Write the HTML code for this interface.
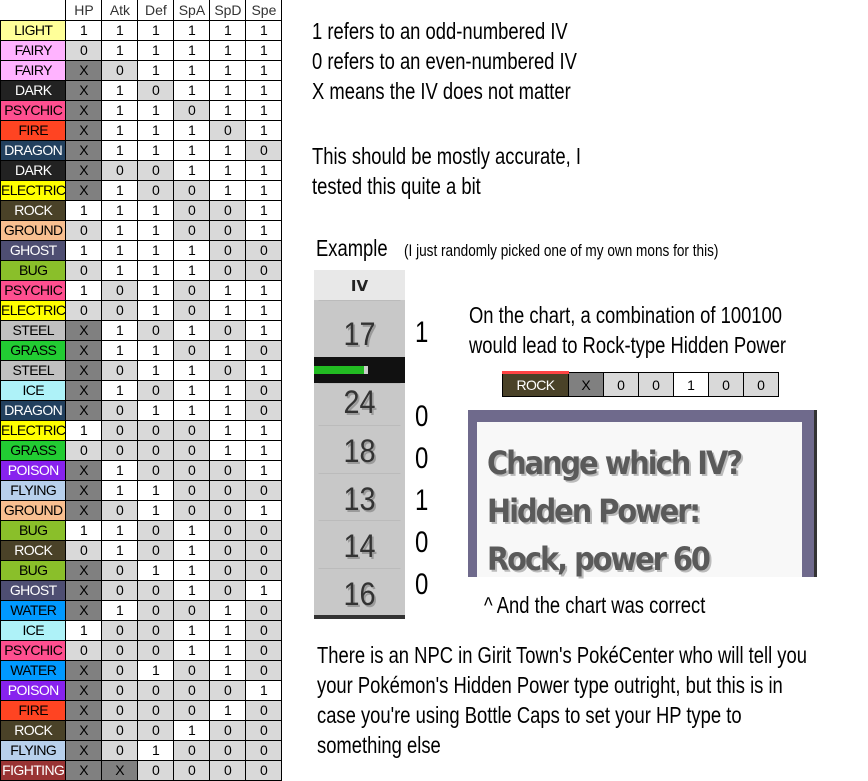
<!DOCTYPE html>
<html><head><meta charset="utf-8"><style>
*{margin:0;padding:0;box-sizing:border-box}
body{width:868px;height:780px;background:#fff;position:relative;overflow:hidden;font-family:"Liberation Sans","DejaVu Sans",sans-serif;color:#000}
table{position:absolute;left:0;top:0;border-collapse:collapse;font-size:14px}
td{width:36px;height:20px;border:1px solid #000;text-align:center;padding:0;line-height:18px}
td:first-child{width:64px;font-weight:normal;letter-spacing:-0.6px}
.hd td{border-top:none;color:#333}
.hd td:first-child{border-left:none}
.z{background:#d9d9d9}.x{background:#808080}
.LI{background:#ffff99}.FA{background:#ffb3ff}.DA{background:#222;color:#fff}.PS{background:#ff4f8f}
.FI{background:#ff4422}.DR{background:#22405e;color:#fff}.EL{background:#ffff00}.RO{background:#4a4228;color:#fff}
.GR{background:#f8bf90}.GH{background:#4e4e72;color:#fff}.BU{background:#8abf2a}.ST{background:#c0c0c0}
.GA{background:#22cc33}.IC{background:#aef2f8}.PO{background:#8822ee;color:#fff}.FL{background:#b8d0ec}
.WA{background:#0099ff}.FG{background:#993333;color:#fff}
.t{position:absolute;white-space:nowrap;font-size:23px;transform:scaleX(0.8);transform-origin:0 0;line-height:30px}
.iv{position:absolute;left:314px;top:270px;width:91px;height:349px;background:#c8c8c8}
.ivh{position:absolute;left:0;top:0;width:91px;height:30px;background:#e8e8e8;font:bold 15px "DejaVu Sans",sans-serif;text-align:center;line-height:32px;color:#222}
.ivn{position:absolute;left:0;width:91px;height:48px;border-top:1px solid #bbb;text-align:center;font-size:32px;color:#333;line-height:50px;text-shadow:2px 2px 0 #9a9a9a;transform:scaleX(.9)}
.d{position:absolute;left:415px;font-size:30px;transform:scaleX(.8);transform-origin:0 0}
.dlg{position:absolute;left:468px;top:410px;width:349px;height:167px;background:#6f6a8c;border-right:3px solid #333}
.dlgi{position:absolute;left:9px;top:12px;right:12px;bottom:0;background:#f8f8f8}
.dl{position:absolute;left:10px;font:bold 32px "DejaVu Sans Condensed","DejaVu Sans",sans-serif;color:#5a5a5a;text-shadow:2px 2px 0 #bbb;letter-spacing:-2px;white-space:nowrap}
.mini{position:absolute;top:371px;border-collapse:collapse;font-size:14px}
</style></head><body>
<table>
<tr class="hd"><td></td><td>HP</td><td>Atk</td><td>Def</td><td>SpA</td><td>SpD</td><td>Spe</td></tr>
<tr><td class="LI">LIGHT</td><td>1</td><td>1</td><td>1</td><td>1</td><td>1</td><td>1</td></tr>
<tr><td class="FA">FAIRY</td><td class="z">0</td><td>1</td><td>1</td><td>1</td><td>1</td><td>1</td></tr>
<tr><td class="FA">FAIRY</td><td class="x">X</td><td class="z">0</td><td>1</td><td>1</td><td>1</td><td>1</td></tr>
<tr><td class="DA">DARK</td><td class="x">X</td><td>1</td><td class="z">0</td><td>1</td><td>1</td><td>1</td></tr>
<tr><td class="PS">PSYCHIC</td><td class="x">X</td><td>1</td><td>1</td><td class="z">0</td><td>1</td><td>1</td></tr>
<tr><td class="FI">FIRE</td><td class="x">X</td><td>1</td><td>1</td><td>1</td><td class="z">0</td><td>1</td></tr>
<tr><td class="DR">DRAGON</td><td class="x">X</td><td>1</td><td>1</td><td>1</td><td>1</td><td class="z">0</td></tr>
<tr><td class="DA">DARK</td><td class="x">X</td><td class="z">0</td><td class="z">0</td><td>1</td><td>1</td><td>1</td></tr>
<tr><td class="EL">ELECTRIC</td><td class="x">X</td><td>1</td><td class="z">0</td><td class="z">0</td><td>1</td><td>1</td></tr>
<tr><td class="RO">ROCK</td><td>1</td><td>1</td><td>1</td><td class="z">0</td><td class="z">0</td><td>1</td></tr>
<tr><td class="GR">GROUND</td><td class="z">0</td><td>1</td><td>1</td><td class="z">0</td><td class="z">0</td><td>1</td></tr>
<tr><td class="GH">GHOST</td><td>1</td><td>1</td><td>1</td><td>1</td><td class="z">0</td><td class="z">0</td></tr>
<tr><td class="BU">BUG</td><td class="z">0</td><td>1</td><td>1</td><td>1</td><td class="z">0</td><td class="z">0</td></tr>
<tr><td class="PS">PSYCHIC</td><td>1</td><td class="z">0</td><td>1</td><td class="z">0</td><td>1</td><td>1</td></tr>
<tr><td class="EL">ELECTRIC</td><td class="z">0</td><td class="z">0</td><td>1</td><td class="z">0</td><td>1</td><td>1</td></tr>
<tr><td class="ST">STEEL</td><td class="x">X</td><td>1</td><td class="z">0</td><td>1</td><td class="z">0</td><td>1</td></tr>
<tr><td class="GA">GRASS</td><td class="x">X</td><td>1</td><td>1</td><td class="z">0</td><td>1</td><td class="z">0</td></tr>
<tr><td class="ST">STEEL</td><td class="x">X</td><td class="z">0</td><td>1</td><td>1</td><td class="z">0</td><td>1</td></tr>
<tr><td class="IC">ICE</td><td class="x">X</td><td>1</td><td class="z">0</td><td>1</td><td>1</td><td class="z">0</td></tr>
<tr><td class="DR">DRAGON</td><td class="x">X</td><td class="z">0</td><td>1</td><td>1</td><td>1</td><td class="z">0</td></tr>
<tr><td class="EL">ELECTRIC</td><td>1</td><td class="z">0</td><td class="z">0</td><td class="z">0</td><td>1</td><td>1</td></tr>
<tr><td class="GA">GRASS</td><td class="z">0</td><td class="z">0</td><td class="z">0</td><td class="z">0</td><td>1</td><td>1</td></tr>
<tr><td class="PO">POISON</td><td class="x">X</td><td>1</td><td class="z">0</td><td class="z">0</td><td class="z">0</td><td>1</td></tr>
<tr><td class="FL">FLYING</td><td class="x">X</td><td>1</td><td>1</td><td class="z">0</td><td class="z">0</td><td class="z">0</td></tr>
<tr><td class="GR">GROUND</td><td class="x">X</td><td class="z">0</td><td>1</td><td class="z">0</td><td class="z">0</td><td>1</td></tr>
<tr><td class="BU">BUG</td><td>1</td><td>1</td><td class="z">0</td><td>1</td><td class="z">0</td><td class="z">0</td></tr>
<tr><td class="RO">ROCK</td><td class="z">0</td><td>1</td><td class="z">0</td><td>1</td><td class="z">0</td><td class="z">0</td></tr>
<tr><td class="BU">BUG</td><td class="x">X</td><td class="z">0</td><td>1</td><td>1</td><td class="z">0</td><td class="z">0</td></tr>
<tr><td class="GH">GHOST</td><td class="x">X</td><td class="z">0</td><td class="z">0</td><td>1</td><td class="z">0</td><td>1</td></tr>
<tr><td class="WA">WATER</td><td class="x">X</td><td>1</td><td class="z">0</td><td class="z">0</td><td>1</td><td class="z">0</td></tr>
<tr><td class="IC">ICE</td><td>1</td><td class="z">0</td><td class="z">0</td><td>1</td><td>1</td><td class="z">0</td></tr>
<tr><td class="PS">PSYCHIC</td><td class="z">0</td><td class="z">0</td><td class="z">0</td><td>1</td><td>1</td><td class="z">0</td></tr>
<tr><td class="WA">WATER</td><td class="x">X</td><td class="z">0</td><td>1</td><td class="z">0</td><td>1</td><td class="z">0</td></tr>
<tr><td class="PO">POISON</td><td class="x">X</td><td class="z">0</td><td class="z">0</td><td class="z">0</td><td class="z">0</td><td>1</td></tr>
<tr><td class="FI">FIRE</td><td class="x">X</td><td class="z">0</td><td class="z">0</td><td class="z">0</td><td>1</td><td class="z">0</td></tr>
<tr><td class="RO">ROCK</td><td class="x">X</td><td class="z">0</td><td class="z">0</td><td>1</td><td class="z">0</td><td class="z">0</td></tr>
<tr><td class="FL">FLYING</td><td class="x">X</td><td class="z">0</td><td>1</td><td class="z">0</td><td class="z">0</td><td class="z">0</td></tr>
<tr><td class="FG">FIGHTING</td><td class="x">X</td><td class="x">X</td><td class="z">0</td><td class="z">0</td><td class="z">0</td><td class="z">0</td></tr>
</table>

<div class="t" style="left:312px;top:16px">1 refers to an odd-numbered IV<br>0 refers to an even-numbered IV<br>X means the IV does not matter</div>
<div class="t" style="left:312px;top:141px">This should be mostly accurate, I<br>tested this quite a bit</div>
<div class="t" style="left:316px;top:233px">Example</div>
<div class="t" style="left:404px;top:236px;font-size:17px">(I just randomly picked one of my own mons for this)</div>

<div class="iv">
<div class="ivh">IV</div>
<div class="ivn" style="top:30px;height:57px;line-height:66px">17</div>
<div style="position:absolute;left:0;top:87px;width:91px;height:26px;background:#111"></div>
<div style="position:absolute;left:0;top:96px;width:54px;height:8px;background:#22bb22;border-right:4px solid #ccc"></div>
<div class="ivn" style="top:113px;line-height:36px">24</div>
<div class="ivn" style="top:155px">18</div>
<div class="ivn" style="top:203px">13</div>
<div class="ivn" style="top:250px">14</div>
<div class="ivn" style="top:298px">16</div>
<div style="position:absolute;left:0;top:345px;width:91px;height:4px;background:#333"></div>
</div>
<div class="d" style="top:316px">1</div>
<div class="d" style="top:400px">0</div>
<div class="d" style="top:442px">0</div>
<div class="d" style="top:484px">1</div>
<div class="d" style="top:526px">0</div>
<div class="d" style="top:568px">0</div>

<div class="t" style="left:469px;top:300px">On the chart, a combination of 100100<br>would lead to Rock-type Hidden Power</div>
<table class="mini" style="left:502px">
<tr><td class="RO" style="width:66px;height:24px;border-top:3px solid #f44;color:#fff">ROCK</td><td class="x" style="width:35px">X</td><td class="z" style="width:35px">0</td><td class="z" style="width:35px">0</td><td style="width:35px">1</td><td class="z" style="width:35px">0</td><td class="z" style="width:35px">0</td></tr>
</table>

<div class="dlg"><div class="dlgi">
<div class="dl" style="top:22px">Change which IV?</div>
<div class="dl" style="top:70px">Hidden Power:</div>
<div class="dl" style="top:118px">Rock, power 60</div>
</div></div>

<div class="t" style="left:484px;top:590px">^ And the chart was correct</div>
<div class="t" style="left:317px;top:640px">There is an NPC in Girit Town's PokéCenter who will tell you<br>your Pokémon's Hidden Power type outright, but this is in<br>case you're using Bottle Caps to set your HP type to<br>something else</div>
</body></html>
